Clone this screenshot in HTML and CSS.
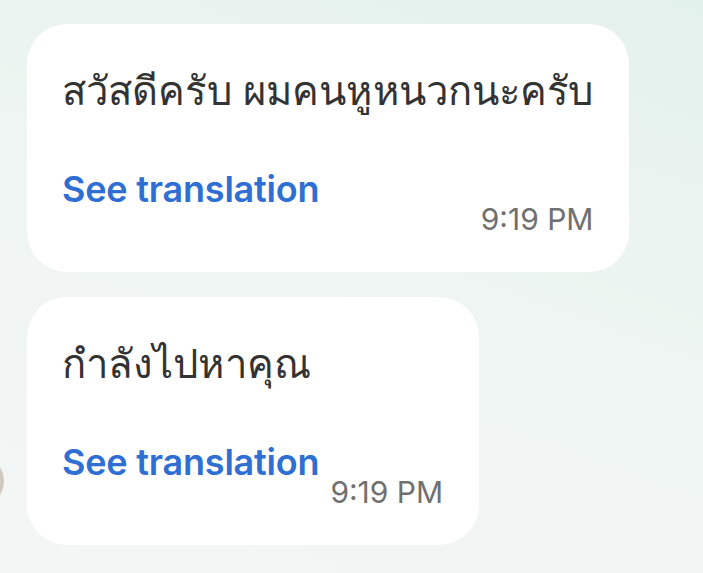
FILE: index.html
```html
<!DOCTYPE html>
<html lang="th">
<head>
  <meta charset="UTF-8">
  <meta name="viewport" content="width=device-width, initial-scale=1.0">
  <title>Chat</title>
  <link rel="stylesheet" href="styles.css">
</head>
<body>
  <div class="chat">
    <!-- avatar peeking in from the left edge -->
    <div class="avatar"></div>

    <div class="bubble">
      <div class="message">สวัสดีครับ ผมคนหูหนวกนะครับ</div>
      <div class="footer">
        <a class="translate" href="#">See translation</a>
        <span class="time">9:19 PM</span>
      </div>
    </div>

    <div class="bubble">
      <div class="message">กำลังไปหาคุณ</div>
      <div class="footer">
        <a class="translate" href="#">See translation</a>
        <span class="time">9:19 PM</span>
      </div>
    </div>
  </div>
</body>
</html>
```

FILE: styles.css
```css
body {
  margin: 0;
  height: 573px;
  overflow: hidden;
  background: linear-gradient(200deg, #e3f1ec 0%, #eef5f2 45%, #f3f6f5 100%);
  font-family: Inter, "Noto Sans", sans-serif;
}

.chat {
  position: relative;
  display: flex;
  flex-direction: column;
  align-items: flex-start;
  gap: 25px;
  padding: 24px 0 0 27px;
}

.avatar {
  position: absolute;
  left: -46px;
  top: 456px;
  width: 50px;
  height: 50px;
  border-radius: 50%;
  background: #cfc8c0;
}

.bubble {
  background: #fff;
  border-radius: 40px;
  padding: 42px 36px 36px 35px;
  box-sizing: border-box;
  height: 248px;
}

.message {
  font-size: 40px;
  color: #333;
  line-height: 50px;
  letter-spacing: 0.1px;
}

.footer {
  display: grid;
  grid-template-columns: auto auto;
  justify-content: space-between;
  column-gap: 11px;
  margin-top: 58px;
}

.translate {
  grid-column: 1;
  grid-row: 1;
  font-size: 36px;
  font-weight: 600;
  color: #2f6ed3;
  text-decoration: none;
  line-height: 30px;
  letter-spacing: -0.2px;
}

.time {
  grid-column: 2;
  grid-row: 2;
  font-size: 30px;
  color: #707070;
  line-height: 30px;
}
```
